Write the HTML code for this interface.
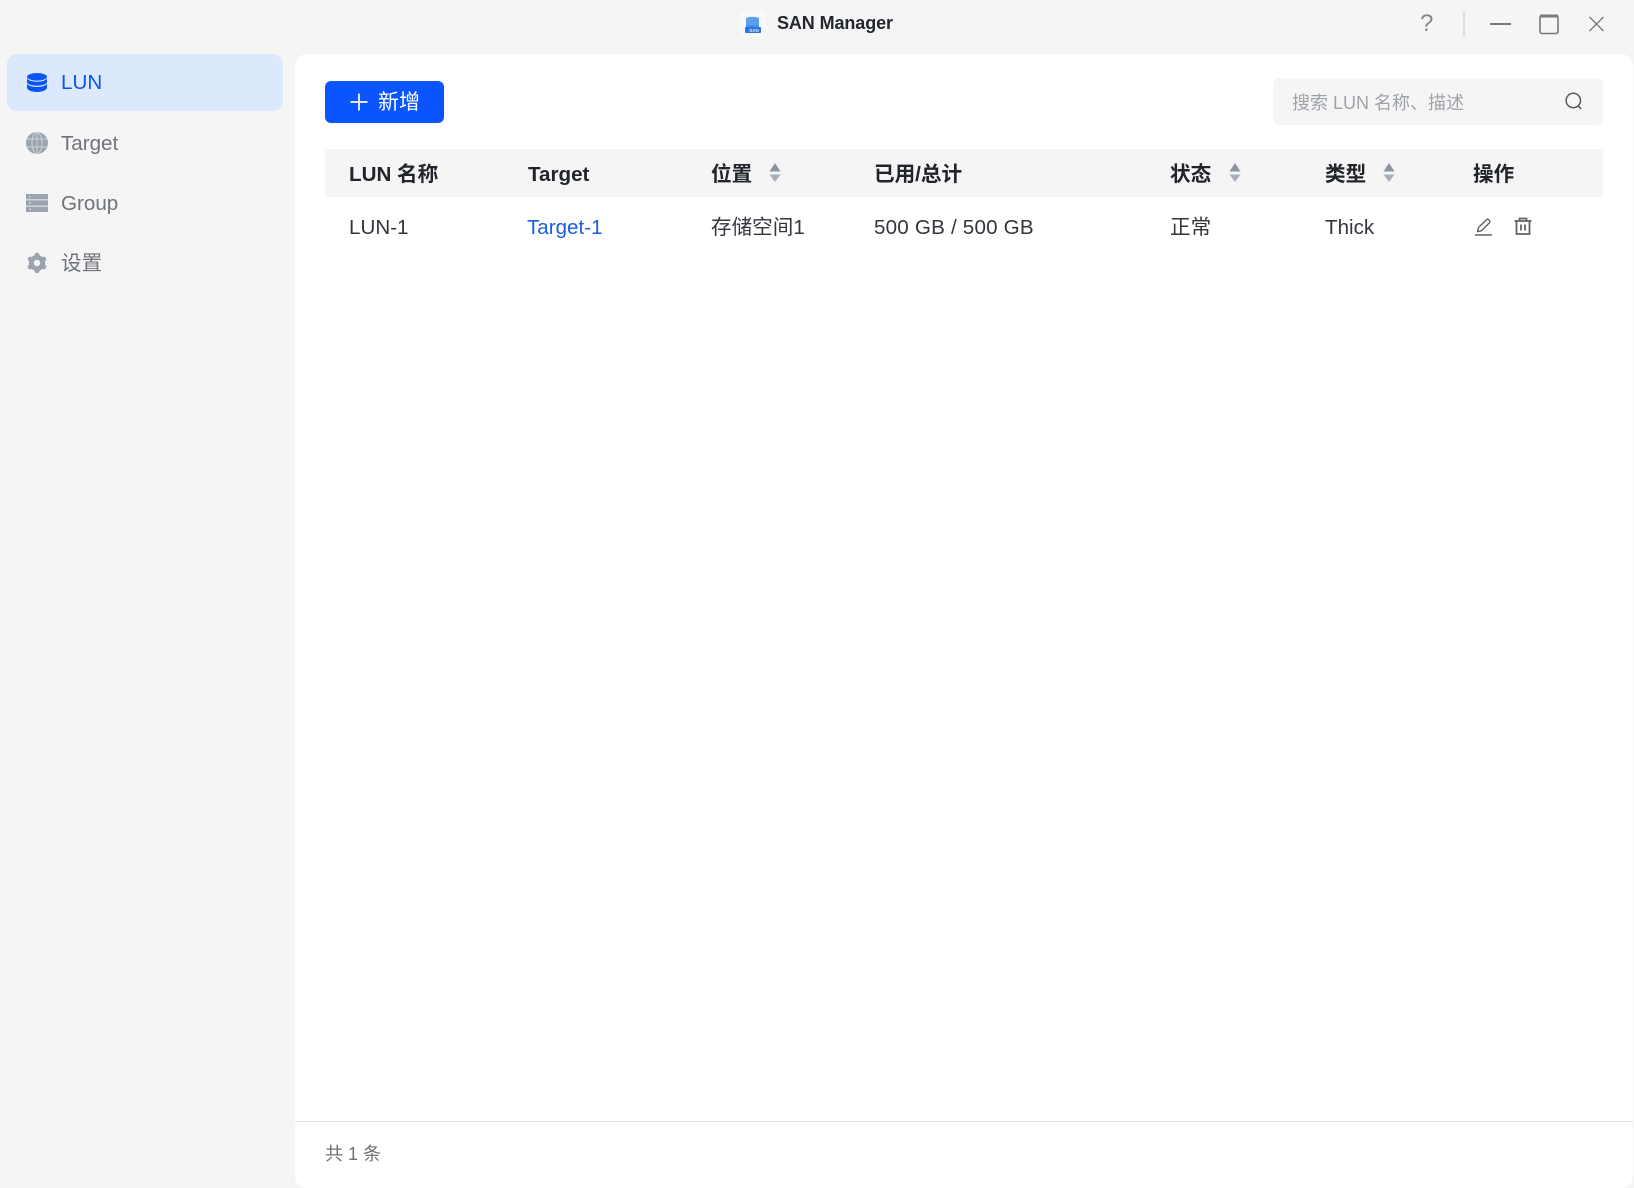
<!DOCTYPE html>
<html lang="zh"><head><meta charset="utf-8"><title>SAN Manager</title>
<style>
*{box-sizing:border-box}
html,body{margin:0;padding:0;width:1634px;height:1188px;overflow:hidden;background:#f5f5f5;font-family:"Liberation Sans","Noto Sans CJK SC",sans-serif;color:#2b2f36}
.t{position:absolute;white-space:nowrap;line-height:30px;height:30px;font-size:20.6px}
.h{font-weight:700;color:#21252b;top:160px}
.c{top:213px;color:#33373d}
.n{left:61px;color:#6f747b}
svg{position:absolute;display:block}
.abs{position:absolute}
</style></head><body>
<svg style="left:738px;top:9px" width="30" height="30" viewBox="0 0 30 30">
<rect x="2" y="2" width="26" height="26" rx="6" fill="#f8f9fb"/>
<path d="M8 9.500c0-2.200 13-2.200 13 0V17H8z" fill="#5aa0ee"/>
<path d="M8 16h13v3H8z" fill="#4a90e6"/>
<rect x="7" y="18" width="16" height="6" rx="1" fill="#2a78de"/>
<text x="16" y="23" font-size="4.500" font-weight="700" fill="#dcecff" text-anchor="middle" font-family="Liberation Sans">SAN</text>
</svg>
<div class="t" style="left:777px;top:8px;font-size:18px;font-weight:700;color:#23272e;letter-spacing:-.1px">SAN Manager</div>
<div class="t" style="left:1420px;top:9px;font-size:24px;color:#85888d">?</div>
<div class="abs" style="left:1463px;top:12px;width:2px;height:24px;background:#dcdde0"></div>
<svg style="left:1485px;top:10px" width="130" height="30" viewBox="0 0 130 30" fill="none" stroke="#77797d">
<path d="M5 14h21" stroke-width="2"/>
<rect x="55" y="5.500" width="18" height="18" rx="2" stroke-width="1.600"/><path d="M55 6h18" stroke-width="3"/>
<path d="M104.500 7l14 14M118.500 7l-14 14" stroke-width="1.300"/>
</svg>

<div class="abs" style="left:7px;top:54px;width:276px;height:57px;background:#dce9fd;border-radius:10px"></div>
<svg style="left:27px;top:73px" width="20" height="19" viewBox="0 0 20 19" fill="#0a55f0">
<ellipse cx="10" cy="3.800" rx="10" ry="3.800"/>
<path d="M0 5.500C2 8 6 8.700 10 8.700S18 8 20 5.500V9c0 2.200-4.500 3.700-10 3.700S0 11.200 0 9z"/>
<path d="M0 10.800C2 13.300 6 14 10 14s8-.7 10-3.200V14.500C20 17 15.500 19 10 19S0 17 0 14.500z"/>
</svg>
<div class="t n" style="top:68px;color:#0a55f0">LUN</div>
<svg style="left:26px;top:132px" width="22" height="22" viewBox="0 0 22 22">
<circle cx="11" cy="11" r="11" fill="#9aa3ae"/>
<g fill="none" stroke="#cfd4da" stroke-width="1"><ellipse cx="11" cy="11" rx="5" ry="10.500"/><path d="M11 0v22M.5 7h21M.5 15h21"/></g>
</svg>
<div class="t n" style="top:129px">Target</div>
<svg style="left:26px;top:194px" width="22" height="18" viewBox="0 0 22 18" fill="#9aa3ae">
<rect y="0" width="22" height="5.400"/><rect y="6.300" width="22" height="5.400"/><rect y="12.600" width="22" height="5.400"/>
<path d="M3 2.200h2v1H3zM3 8.500h2v1H3zM3 14.800h2v1H3z" fill="#e3e6ea"/>
</svg>
<div class="t n" style="top:189px">Group</div>
<svg style="left:26px;top:252px" width="22" height="22" viewBox="0 0 22 22">
<circle cx="11" cy="11" r="8" fill="#9aa3ae"/>
<g stroke="#9aa3ae" stroke-width="5" stroke-linecap="round"><path d="M11 3.300v15.400M4.300 7.150l13.400 7.700M17.700 7.150l-13.400 7.700"/></g>
<circle cx="11" cy="11" r="3.200" fill="#f5f5f5"/>
</svg>
<div class="t n" style="top:249px">设置</div>

<div class="abs" style="left:295px;top:54px;width:1338px;height:1134px;background:#fff;border-radius:12px"></div>

<div class="abs" style="left:325px;top:81px;width:119px;height:42px;background:#0a55ff;border-radius:6px"></div>
<svg style="left:349px;top:92px" width="20" height="20" viewBox="0 0 20 20"><path d="M10 1.500v17M1.500 10h17" stroke="#fff" stroke-width="1.700" fill="none"/></svg>
<div class="t" style="left:378px;top:88px;color:#fff;font-size:21px">新增</div>

<div class="abs" style="left:1273px;top:78px;width:330px;height:47px;background:#f5f5f5;border-radius:7px"></div>
<div class="t" style="left:1292px;top:88px;font-size:18px;color:#9ea3aa">搜索 LUN 名称、描述</div>
<svg style="left:1563px;top:90px" width="22" height="22" viewBox="0 0 22 22" fill="none" stroke="#565a60" stroke-width="1.500"><circle cx="10.300" cy="10.500" r="7.200"/><path d="M15.300 16l2.800 3"/></svg>

<div class="abs" style="left:325px;top:149px;width:1278px;height:48px;background:#f5f5f5"></div>
<div class="t h" style="left:349px">LUN 名称</div>
<div class="t h" style="left:528px">Target</div>
<div class="t h" style="left:711px">位置</div>
<div class="t h" style="left:874px">已用/总计</div>
<div class="t h" style="left:1170px">状态</div>
<div class="t h" style="left:1325px">类型</div>
<div class="t h" style="left:1473px">操作</div>
<svg style="left:769px;top:162px" width="12" height="21" viewBox="0 0 12 21"><path d="M6 1l5.500 8.500H.5z" fill="#8a95a3"/><path d="M6 20l5.500-7.500H.5z" fill="#a9afb8"/></svg>
<svg style="left:1229px;top:162px" width="12" height="21" viewBox="0 0 12 21"><path d="M6 1l5.500 8.500H.5z" fill="#8a95a3"/><path d="M6 20l5.500-7.500H.5z" fill="#a9afb8"/></svg>
<svg style="left:1383px;top:162px" width="12" height="21" viewBox="0 0 12 21"><path d="M6 1l5.500 8.500H.5z" fill="#8a95a3"/><path d="M6 20l5.500-7.500H.5z" fill="#a9afb8"/></svg>

<div class="t c" style="left:349px">LUN-1</div>
<div class="t c" style="left:527px;color:#1a5fe0">Target-1</div>
<div class="t c" style="left:711px">存储空间1</div>
<div class="t c" style="left:874px;letter-spacing:.2px">500 GB / 500 GB</div>
<div class="t c" style="left:1170px">正常</div>
<div class="t c" style="left:1325px">Thick</div>
<svg style="left:1474px;top:217px" width="20" height="20" viewBox="0 0 20 20" fill="none" stroke="#5f6368" stroke-width="1.400"><path d="M3.500 14.500l1-4L12.500 2.700a1.500 1.500 0 0 1 2.200 0l.8.8a1.500 1.500 0 0 1 0 2.200L7.500 13.700z"/><path d="M1 18h17"/></svg>
<svg style="left:1513px;top:216px" width="20" height="20" viewBox="0 0 20 20" fill="none" stroke="#5f6368" stroke-width="1.800"><path d="M1.500 5h17M6.500 5V2.500h7V5M3.500 5v13h13V5M8 8.500v6M12 8.500v6"/></svg>

<div class="abs" style="left:295px;top:1121px;width:1338px;height:1px;background:#e3e4e6"></div>
<div class="t" style="left:325px;top:1139px;font-size:18px;color:#6d7176">共 1 条</div>
</body></html>
